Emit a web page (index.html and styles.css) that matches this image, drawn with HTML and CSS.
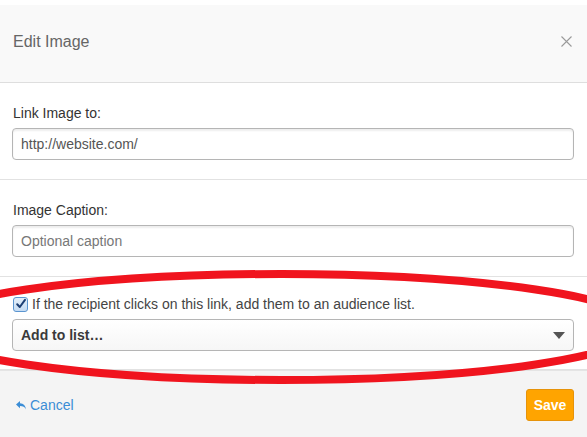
FILE: index.html
```html
<!DOCTYPE html>
<html>
<head>
<meta charset="utf-8">
<link rel="stylesheet" href="styles.css">
</head>
<body>
<div class="modal">
  <div class="modal-header">
    <h1 class="title">Edit Image</h1>
    <svg class="close" width="11" height="11" viewBox="0 0 11 11"><path d="M0.5 0.5L10.5 10.5M10.5 0.5L0.5 10.5" stroke="#9a9a9a" stroke-width="1.1" fill="none"/></svg>
  </div>
  <div class="section">
    <label class="label">Link Image to:</label>
    <div class="input">http://website.com/</div>
  </div>
  <div class="section">
    <label class="label">Image Caption:</label>
    <div class="input placeholder">Optional caption</div>
  </div>
  <div class="section last">
    <div class="check-row">
      <span class="checkbox"><svg width="12" height="12" viewBox="0 0 12 12"><path d="M2.2 6.2L4.8 9L10 1.8" stroke="#1d3f73" stroke-width="2" fill="none" stroke-linecap="round" stroke-linejoin="round"/></svg></span>
      <span class="check-text">If the recipient clicks on this link, add them to an audience list.</span>
    </div>
    <div class="select">
      <span>Add to list…</span>
      <span class="caret"></span>
    </div>
  </div>
  <div class="modal-footer">
    <a class="cancel"><svg width="10" height="9" viewBox="0 0 10 9"><path d="M4 0L0 3.6L4 7.2V5C7 5 8.8 5.8 10 8.5C9.6 4.8 7.6 2.6 4 2.3Z" fill="#3b8dd6"/></svg>Cancel</a>
    <button class="save">Save</button>
  </div>
</div>
<svg class="annotation" width="587" height="437" viewBox="0 0 587 437">
  <ellipse cx="281" cy="327" rx="360" ry="53" fill="none" stroke="#f0141e" stroke-width="8"/>
</svg>
</body>
</html>
```

FILE: styles.css
```css
html, body {
  margin: 0;
  padding: 0;
  background: #ffffff;
  font-family: "Liberation Sans", Arial, sans-serif;
  color: #333;
}
body {
  position: relative;
  width: 587px;
  height: 437px;
  overflow: hidden;
}
.modal {
  margin-top: 5px;
  display: flex;
  flex-direction: column;
}
.modal-header {
  height: 77px;
  background: #f9f9f9;
  border-bottom: 1px solid #dedede;
  display: flex;
  align-items: center;
  justify-content: space-between;
  padding: 0 15px 0 13px;
}
.title {
  margin: 0;
  font-size: 16px;
  font-weight: normal;
  color: #666;
  line-height: 20px;
  position: relative;
  top: -2px;
}
.close {
  display: block;
  position: relative;
  top: -2px;
}
.section {
  padding: 20px 13px 19px 12px;
  border-bottom: 1px solid #e2e2e2;
  display: flex;
  flex-direction: column;
}
.section.last {
  padding-top: 17px;
  padding-bottom: 18px;
}
.label {
  font-size: 14px;
  line-height: 20px;
  margin: 0 0 5px 1px;
  color: #333;
}
.input {
  height: 30px;
  border: 1px solid #b5b5b5;
  border-radius: 4px;
  box-shadow: inset 0 2px 2px rgba(0, 0, 0, 0.07);
  font-size: 14px;
  line-height: 30px;
  padding: 0 8px;
  color: #555;
  background: #fff;
}
.input.placeholder {
  color: #777;
}
.check-row {
  display: flex;
  align-items: center;
  height: 20px;
  margin: 0 0 5px 1px;
}
.checkbox {
  width: 13px;
  height: 13px;
  border: 1px solid #5b95d0;
  border-radius: 3px;
  background: linear-gradient(#e4effa, #c5dcf3);
  display: flex;
  align-items: center;
  justify-content: center;
  margin-right: 4px;
}
.check-text {
  font-size: 14px;
  color: #444;
}
.select {
  height: 30px;
  border: 1px solid #b5b5b5;
  border-radius: 4px;
  background: linear-gradient(#ffffff, #f6f6f6);
  display: flex;
  align-items: center;
  justify-content: space-between;
  padding: 0 8px;
  font-size: 14px;
  font-weight: bold;
  color: #3a3a3a;
}
.caret {
  width: 0;
  height: 0;
  border-left: 6px solid transparent;
  border-right: 6px solid transparent;
  border-top: 7px solid #555;
}
.modal-footer {
  height: 64px;
  background: #f4f4f4;
  border-top: 1px solid #e4e4e4;
  display: flex;
  align-items: center;
  justify-content: space-between;
  padding: 2px 13px 0 16px;
}
.cancel {
  display: flex;
  align-items: center;
  gap: 4px;
  font-size: 14px;
  color: #3b8dd6;
}
.save {
  width: 48px;
  height: 32px;
  background: #ffa400;
  border: 1px solid #e6930a;
  border-radius: 3px;
  color: #fff;
  font-family: "Liberation Sans", Arial, sans-serif;
  font-weight: bold;
  font-size: 14px;
  padding: 0;
}
.annotation {
  position: absolute;
  left: 0;
  top: 0;
  pointer-events: none;
}
```
